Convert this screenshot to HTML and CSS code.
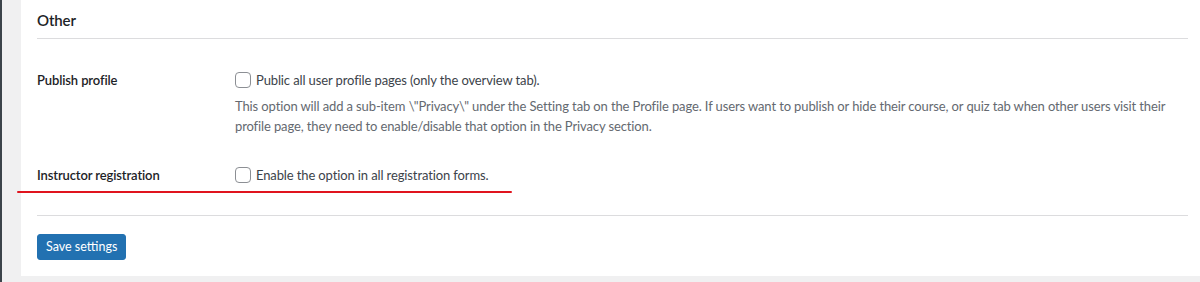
FILE: index.html
```html
<!DOCTYPE html>
<html lang="en">
<head>
    <meta charset="UTF-8">
    <title>Settings</title>
    <link rel="stylesheet" href="styles.css">
</head>
<body>
    <div class="panel">
        <h2 class="section-title">Other</h2>
        <div class="form-rows">
            <div class="form-row">
                <div class="form-label">Publish profile</div>
                <div class="form-field">
                    <label class="check">
                        <span class="check-box"></span>
                        Public all user profile pages (only the overview tab).
                    </label>
                    <p class="desc">This option will add a sub-item \"Privacy\" under the Setting tab on the Profile page. If users want to publish or hide their course, or quiz tab when other users visit their profile page, they need to enable/disable that option in the Privacy section.</p>
                </div>
            </div>
            <div class="form-row marked">
                <div class="form-label">Instructor registration</div>
                <div class="form-field">
                    <label class="check">
                        <span class="check-box"></span>
                        Enable the option in all registration forms.
                    </label>
                </div>
                <span class="red-mark"></span>
            </div>
        </div>
        <div class="form-footer">
            <button class="btn-primary">Save settings</button>
        </div>
    </div>
</body>
</html>
```

FILE: styles.css
```css
* {
    margin: 0;
    padding: 0;
    box-sizing: border-box;
}
body {
    background-color: #f0f0f1;
    border-left: 2px solid #3c434a;
    height: 282px;
    font-family: Lato, "Noto Sans", sans-serif;
    font-size: 13px;
    letter-spacing: -0.12px;
    color: #3c434a;
}
.panel {
    position: relative;
    margin-left: 19px;
    height: 276px;
    background-color: #fff;
    padding: 10px 12px 0 16px;
}
.section-title {
    font-size: 15px;
    font-weight: 600;
    color: #1d2327;
    line-height: 20px;
    padding-bottom: 8px;
    border-bottom: 1px solid #dcdcde;
}
.form-row {
    position: relative;
    display: grid;
    grid-template-columns: 198px 1fr;
}
.form-row:first-child {
    padding-top: 31px;
}
.form-row.marked {
    padding-top: 29px;
    padding-bottom: 30px;
    border-bottom: 1px solid #dcdcde;
}
.form-label {
    font-weight: 600;
    color: #1d2327;
    line-height: 20px;
}
.check {
    display: flex;
    align-items: center;
    gap: 5px;
    line-height: 20px;
}
.check-box {
    display: inline-block;
    width: 16px;
    height: 16px;
    border: 1px solid #8c8f94;
    border-radius: 4px;
    background-color: #fff;
}
.desc {
    margin-top: 6px;
    max-width: 940px;
    line-height: 20px;
    color: #646970;
}
.red-mark {
    position: absolute;
    left: -20px;
    bottom: 22px;
    width: 495px;
    height: 2px;
    background-color: #e0141e;
    border-radius: 1px;
}
.form-footer {
    padding-top: 18px;
}
.btn-primary {
    font-family: inherit;
    font-size: 12.5px;
    line-height: 24px;
    padding: 0 8px;
    color: #fff;
    background-color: #2271b1;
    border: 1px solid #2271b1;
    border-radius: 3px;
}
```
